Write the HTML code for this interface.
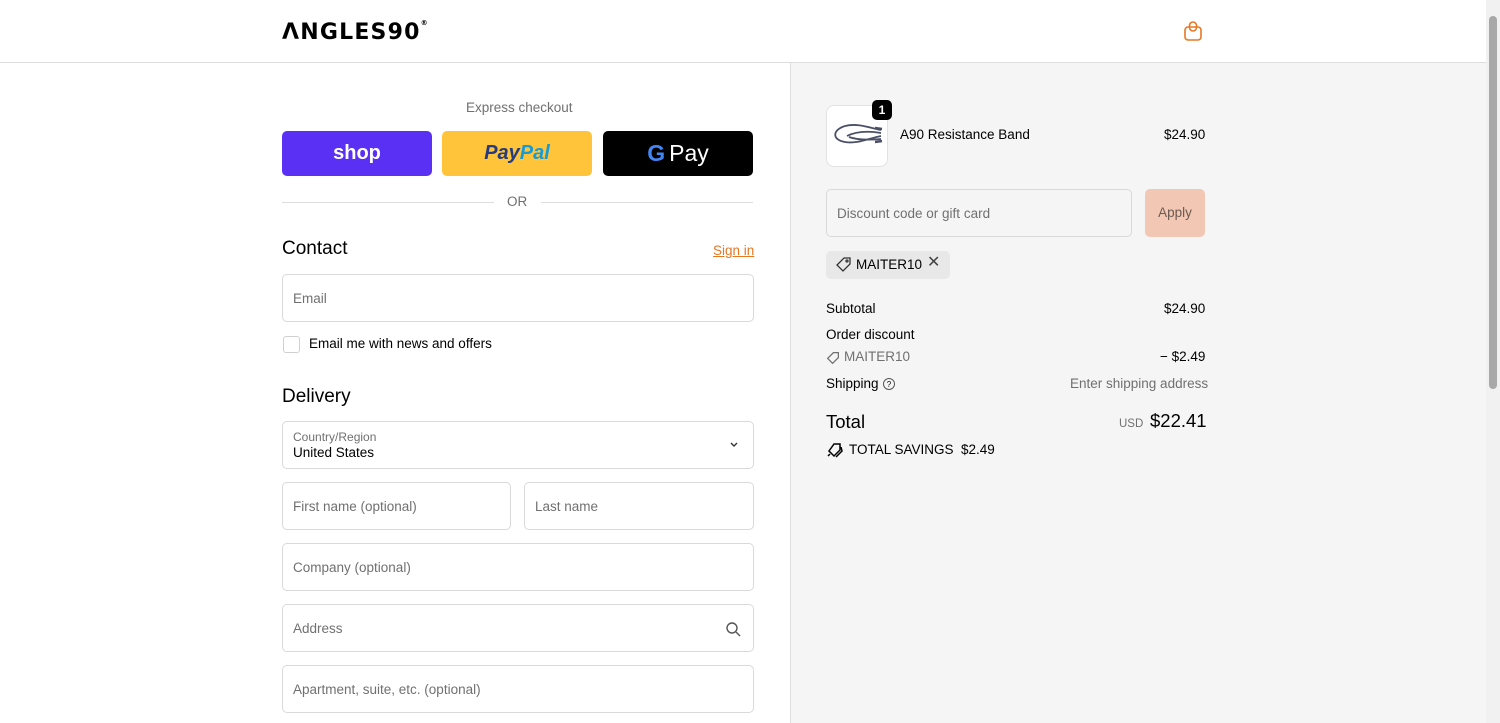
<!DOCTYPE html>
<html><head><meta charset="utf-8"><style>
*{box-sizing:border-box;margin:0;padding:0}
body{width:1500px;height:723px;overflow:hidden;font-family:"Liberation Sans",Arial,sans-serif;background:#fff;position:relative;color:#000}
.hdr{position:absolute;left:0;top:0;width:1486px;height:63px;border-bottom:1px solid #dedede;background:#fff}
.logo{position:absolute;left:282px;top:19px;font-size:22px;font-weight:bold;letter-spacing:1.2px;font-family:"DejaVu Sans","Liberation Sans",sans-serif}
.logo sup{font-size:7px;letter-spacing:0;vertical-align:14px}
.right{position:absolute;left:790px;top:63px;width:696px;height:660px;background:#f5f5f5;border-left:1px solid #dedede}
.sb{position:absolute;left:1486px;top:0;width:14px;height:723px;background:#f1f1f1}
.sb div{position:absolute;left:3px;top:16px;width:8px;height:373px;background:#a8a8a8;border-radius:4px}
.t{position:absolute;font-size:13.5px;white-space:nowrap;line-height:16px}
.btn{position:absolute;top:131px;width:150px;height:45px;border-radius:5px;display:flex;align-items:center;justify-content:center}
.inp{position:absolute;border:1px solid #d9d9d9;border-radius:5px;background:#fff;font-size:13.5px;color:#707070;padding-left:10px;display:flex;align-items:center}
.line{position:absolute;top:202px;height:1px;background:#dedede}
.h2{position:absolute;font-size:19px;left:282px}
.g{color:#707070}
</style></head><body>
<div class="hdr"><div class="logo">ΛNGLES90<sup>®</sup></div>
<svg style="position:absolute;left:1183px;top:20px" width="20" height="22" viewBox="0 0 20 22" fill="none" stroke="#e87722" stroke-width="1.6"><rect x="2" y="7" width="16" height="13" rx="3"/><rect x="6.5" y="2" width="7" height="9" rx="3.5"/></svg>
</div>
<div class="t g" style="left:466px;top:100px">Express checkout</div>
<div class="btn" style="left:282px;background:#5a31f4;color:#fff;font-weight:bold;font-size:20px">shop</div>
<div class="btn" style="left:442px;background:#ffc439;font-weight:bold;font-style:italic;font-size:20px"><span style="color:#253b80">Pay</span><span style="color:#179bd7">Pal</span></div>
<div class="btn" style="left:603px;background:#000;color:#fff;font-size:23px"><span style="font-weight:bold;color:#4285f4;margin-right:4px">G</span>Pay</div>
<div class="line" style="left:282px;width:212px"></div><div class="line" style="left:541px;width:212px"></div>
<div class="t g" style="left:507px;top:194px">OR</div>
<div class="h2" style="top:238px">Contact</div>
<div class="t" style="left:713px;top:243px;color:#e87722;text-decoration:underline">Sign in</div>
<div class="inp" style="left:282px;top:274px;width:472px;height:48px">Email</div>
<div style="position:absolute;left:283px;top:336px;width:17px;height:17px;border:1px solid #d0d0d0;border-radius:3px;background:#fff"></div>
<div class="t" style="left:309px;top:336px">Email me with news and offers</div>
<div class="h2" style="top:386px">Delivery</div>
<div class="inp" style="left:282px;top:421px;width:472px;height:48px;display:block;padding-top:8px"><div style="font-size:12px">Country/Region</div><div style="color:#000;margin-top:1px">United States</div>
<svg style="position:absolute;right:14px;top:19px" width="10" height="8" viewBox="0 0 10 8" fill="none" stroke="#333" stroke-width="1.4"><path d="M2 2l3 3 3-3"/></svg></div>
<div class="inp" style="left:282px;top:482px;width:229px;height:48px">First name (optional)</div>
<div class="inp" style="left:524px;top:482px;width:230px;height:48px">Last name</div>
<div class="inp" style="left:282px;top:543px;width:472px;height:48px">Company (optional)</div>
<div class="inp" style="left:282px;top:604px;width:472px;height:48px">Address
<svg style="position:absolute;right:12px;top:16px" width="16" height="16" viewBox="0 0 16 16" fill="none" stroke="#555" stroke-width="1.4"><circle cx="7" cy="7" r="5"/><path d="M11 11l4 4"/></svg></div>
<div class="inp" style="left:282px;top:665px;width:472px;height:48px">Apartment, suite, etc. (optional)</div>

<div class="right"></div>
<div style="position:absolute;left:826px;top:105px;width:62px;height:62px;background:#fff;border:1px solid #e2e2e2;border-radius:8px;overflow:hidden">
<svg width="60" height="60" viewBox="0 0 60 60" fill="none" stroke="#4a4f66" stroke-width="1.8"><path d="M54 24C40 21 30 17 18 20 5 24 5 34 18 36 30 38 40 33 54 30"/><path d="M54 27C42 25 30 25 20 30"/><path d="M54 33C42 34 30 34 22 31"/><path d="M48 22l7 1M48 36l7-1" stroke-width="2.5"/></svg></div>
<div style="position:absolute;left:872px;top:100px;width:20px;height:20px;background:#000;color:#fff;border-radius:5px;font-size:12px;font-weight:bold;text-align:center;line-height:20px">1</div>
<div class="t" style="left:900px;top:127px">A90 Resistance Band</div>
<div class="t" style="left:1164px;top:127px">$24.90</div>
<div class="inp" style="left:826px;top:189px;width:306px;height:48px;background:#f5f5f5">Discount code or gift card</div>
<div style="position:absolute;left:1145px;top:189px;width:60px;height:48px;background:#f2c8b4;border-radius:5px;color:#6b5a52;font-size:13.5px;text-align:center;line-height:48px">Apply</div>
<div style="position:absolute;left:826px;top:251px;width:124px;height:28px;background:#e8e8e8;border-radius:5px"></div>
<svg style="position:absolute;left:835px;top:256px" width="17" height="17" viewBox="0 0 17 17" fill="none" stroke="#333" stroke-width="1.3"><path d="M9 2h6v6l-7 7-6-6z"/><circle cx="12" cy="5" r="1"/></svg>
<div class="t" style="left:856px;top:257px">MAITER10</div>
<div class="t" style="left:927px;top:255px;font-size:16px;color:#444">✕</div>
<div class="t" style="left:826px;top:301px">Subtotal</div><div class="t" style="left:1164px;top:301px">$24.90</div>
<div class="t" style="left:826px;top:327px">Order discount</div>
<svg style="position:absolute;left:826px;top:351px" width="14" height="14" viewBox="0 0 17 17" fill="none" stroke="#707070" stroke-width="1.5"><path d="M9 2h6v6l-7 7-6-6z"/></svg>
<div class="t g" style="left:844px;top:349px">MAITER10</div><div class="t" style="left:1160px;top:349px">− $2.49</div>
<div class="t" style="left:826px;top:376px">Shipping</div>
<div style="position:absolute;left:883px;top:378px;width:12px;height:12px;border:1px solid #555;border-radius:50%;font-size:8px;text-align:center;line-height:11px">?</div>
<div class="t g" style="left:1070px;top:376px">Enter shipping address</div>
<div class="t" style="left:826px;top:412px;font-size:18.5px;line-height:20px">Total</div>
<div class="t g" style="left:1119px;top:418px;font-size:11.5px;line-height:12px">USD</div>
<div class="t" style="left:1150px;top:411px;font-size:18.5px;line-height:20px">$22.41</div>
<svg style="position:absolute;left:826px;top:443px" width="17" height="15" viewBox="0 0 17 15" fill="none" stroke="#000" stroke-width="1.5"><path d="M8 1h6v6l-6 6-5-5z"/><path d="M4 11l-2 2M15 4l1 4-6 6"/></svg>
<div class="t" style="left:849px;top:442px">TOTAL SAVINGS&nbsp; $2.49</div>
<div class="sb"><div></div></div>
</body></html>
